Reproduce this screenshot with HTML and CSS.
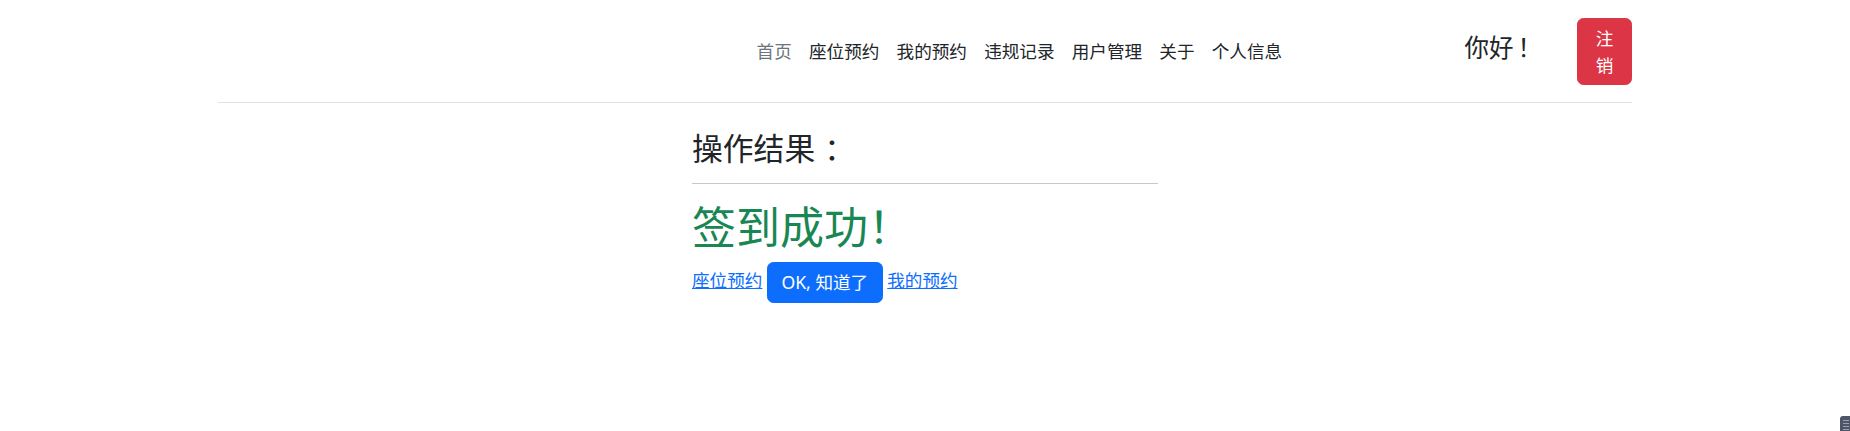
FILE: index.html
```html
<!DOCTYPE html>
<html lang="zh-CN">
<head>
    <meta charset="UTF-8">
    <meta name="viewport" content="width=device-width, initial-scale=1.0">
    <title>操作结果</title>
    <link rel="stylesheet" href="styles.css">
</head>
<body>
    <header class="site-header">
        <ul class="nav">
            <li><a href="#" class="nav-link muted">首页</a></li>
            <li><a href="#" class="nav-link">座位预约</a></li>
            <li><a href="#" class="nav-link">我的预约</a></li>
            <li><a href="#" class="nav-link">违规记录</a></li>
            <li><a href="#" class="nav-link">用户管理</a></li>
            <li><a href="#" class="nav-link">关于</a></li>
            <li><a href="#" class="nav-link">个人信息</a></li>
        </ul>
        <div class="greeting">你好<span class="bang">！</span></div>
        <button class="btn btn-danger logout-btn">注销</button>
    </header>

    <main class="result">
        <h3 class="result-title">操作结果<span class="punct">：</span></h3>
        <hr>
        <h1 class="result-msg">签到成功！</h1>
        <div class="result-actions">
            <a href="#" class="text-link">座位预约</a>
            <button class="btn btn-primary">OK, 知道了</button>
            <a href="#" class="text-link">我的预约</a>
        </div>
    </main>

    <div class="side-widget"></div>
</body>
</html>
```

FILE: styles.css
```css
* {
    box-sizing: border-box;
}

body {
    margin: 0;
    font-family: "Noto Sans", "Noto Sans CJK SC", sans-serif;
    font-size: 17.6px;
    line-height: 1.5;
    color: #212529;
    background: #fff;
}

.site-header {
    width: 1414px;
    height: 103px;
    margin: 0 auto;
    display: flex;
    align-items: center;
    border-bottom: 1px solid #dee2e6;
}

.nav {
    display: flex;
    list-style: none;
    margin: 0 0 0 530px;
    padding: 1px 0 0;
}

.nav-link {
    display: block;
    padding: 8.6px;
    color: #212529;
    text-decoration: none;
    line-height: 26.4px;
}

.nav-link.muted {
    color: #6c757d;
}

.greeting {
    margin-left: auto;
    margin-right: 35px;
    margin-bottom: 6px;
    font-size: 24.5px;
    line-height: 1.2;
}

.greeting .bang {
    padding-left: 4px;
}

.btn {
    display: inline-block;
    padding: 6.4px 13px;
    font-family: inherit;
    font-size: 17.6px;
    line-height: 26.4px;
    color: #fff;
    text-align: center;
    vertical-align: middle;
    border: 1px solid transparent;
    border-radius: 6.4px;
    cursor: pointer;
}

.btn-danger {
    background: #dc3545;
    border-color: #dc3545;
}

.btn-primary {
    padding: 6.4px 13.5px;
    background: #0d6efd;
    border-color: #0d6efd;
}

.logout-btn {
    width: 55px;
    margin-top: 1px;
}

.result {
    width: 466px;
    margin: 0 auto;
    padding-top: 27px;
}

.result-title {
    margin: 0;
    font-size: 30.8px;
    line-height: 37px;
    font-weight: 400;
}

.punct {
    padding-left: 9px;
}

hr {
    margin: 16px 0 17px;
    border: 0;
    border-top: 1px solid #212529;
    opacity: 0.25;
}

.result-msg {
    margin: 0 0 8px;
    font-size: 44px;
    line-height: 52.8px;
    font-weight: 400;
    color: #198754;
}

.result-actions {
    line-height: 26.4px;
}

.text-link {
    color: #0d6efd;
    text-decoration: underline;
}

.side-widget {
    position: fixed;
    right: 0;
    bottom: 0;
    width: 10px;
    height: 15px;
    background: #4e5567;
    border-top-left-radius: 3px;
}

.side-widget::after {
    content: "";
    position: absolute;
    left: 3px;
    top: 4px;
    width: 6px;
    height: 11px;
    background: repeating-linear-gradient(#9aa0ae 0 1px, transparent 1px 3px);
}
```
